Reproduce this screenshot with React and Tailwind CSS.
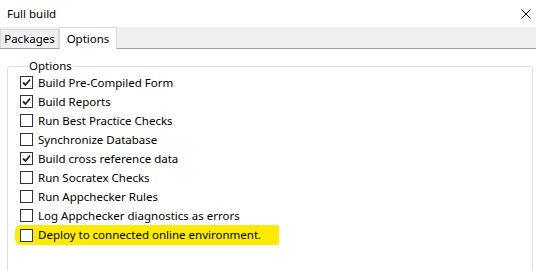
import React from 'react';

const options = [
  { label: 'Build Pre-Compiled Form', checked: true },
  { label: 'Build Reports', checked: true },
  { label: 'Run Best Practice Checks', checked: false },
  { label: 'Synchronize Database', checked: false },
  { label: 'Build cross reference data', checked: true },
  { label: 'Run Socratex Checks', checked: false },
  { label: 'Run Appchecker Rules', checked: false },
  { label: 'Log Appchecker diagnostics as errors', checked: false },
];

function Checkbox({ checked }) {
  return (
    <span className="flex h-[13px] w-[13px] shrink-0 items-center justify-center border border-[#333333] bg-white">
      {checked && (
        <svg width="9" height="9" viewBox="0 0 9 9">
          <path d="M1 4.5 L3.5 7 L8 1.5" fill="none" stroke="#222222" strokeWidth="1.8" />
        </svg>
      )}
    </span>
  );
}

function Row({ label, checked }) {
  return (
    <div className="flex h-[19px] items-center gap-[5px]">
      <Checkbox checked={checked} />
      <span>{label}</span>
    </div>
  );
}

export default function App() {
  return (
    <div
      className="h-[271px] w-[536px] overflow-hidden bg-white text-[11.5px] text-black"
      style={{ fontFamily: '"Noto Sans", "Open Sans", sans-serif' }}
    >
      <div className="flex h-[27px] items-center justify-between pl-[7px] pr-[4px]">
        <span>Full build</span>
        <svg width="10" height="10" viewBox="0 0 10 10" className="mr-[1px]">
          <path d="M0.5 0.5 L9.5 9.5 M9.5 0.5 L0.5 9.5" stroke="#000000" strokeWidth="1" />
        </svg>
      </div>

      <div className="flex h-[22px] items-end border-b border-[#a0a0a0] bg-[#f0f0f0]">
        <div className="flex h-[19px] w-[59px] items-center justify-center border border-b-0 border-[#d9d9d9] bg-[#f0f0f0]">
          Packages
        </div>
        <div className="-mb-px flex h-[22px] w-[58px] items-center justify-center border border-b-0 border-[#d9d9d9] bg-white">
          Options
        </div>
      </div>

      <fieldset className="ml-[7px] mr-[3px] mt-[9px] h-[300px] rounded-[3px] border border-[#d5dfe5] pl-[12px]">
        <legend className="ml-[8px] px-[1px] leading-[16px]">Options</legend>
        <div className="-mt-px flex flex-col">
          {options.map((o) => (
            <Row key={o.label} {...o} />
          ))}
          <div className="-ml-[5px] flex h-[20px] w-[264px] items-center gap-[5px] rounded-l-[6px] rounded-r-[2px] bg-[#ffeb00] pl-[5px]">
            <Checkbox checked={false} />
            <span>Deploy to connected online environment.</span>
          </div>
        </div>
      </fieldset>
    </div>
  );
}
